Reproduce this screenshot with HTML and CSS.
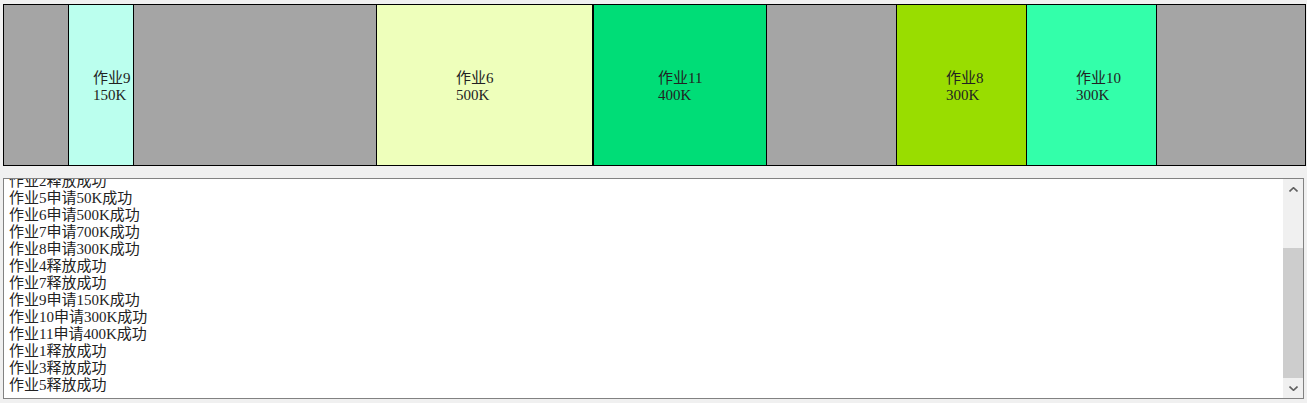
FILE: index.html
```html
<!DOCTYPE html>
<html lang="zh-CN">
<head>
<meta charset="utf-8">
<title>内存分配</title>
<link rel="stylesheet" href="styles.css">
</head>
<body>
<div class="memory">
  <div class="block free" style="width:64px"></div>
  <div class="block job job9 both" style="width:66px"><div class="label" style="padding-left:24px">作业9<br>150K</div></div>
  <div class="block free" style="width:242px"></div>
  <div class="block job job6 both" style="width:217px"><div class="label" style="padding-left:79px">作业6<br>500K</div></div>
  <div class="block job job11 both" style="width:174px"><div class="label" style="padding-left:64px">作业11<br>400K</div></div>
  <div class="block free" style="width:129px"></div>
  <div class="block job job8 left" style="width:130px"><div class="label" style="padding-left:49px">作业8<br>300K</div></div>
  <div class="block job job10 both" style="width:131px"><div class="label" style="padding-left:49px">作业10<br>300K</div></div>
  <div class="block free" style="width:148px"></div>
</div>
<div class="log">
  <div class="log-text">
    <div class="line">作业2释放成功</div>
    <div class="line">作业5申请50K成功</div>
    <div class="line">作业6申请500K成功</div>
    <div class="line">作业7申请700K成功</div>
    <div class="line">作业8申请300K成功</div>
    <div class="line">作业4释放成功</div>
    <div class="line">作业7释放成功</div>
    <div class="line">作业9申请150K成功</div>
    <div class="line">作业10申请300K成功</div>
    <div class="line">作业11申请400K成功</div>
    <div class="line">作业1释放成功</div>
    <div class="line">作业3释放成功</div>
    <div class="line">作业5释放成功</div>
  </div>
  <div class="scrollbar">
    <div class="sb-btn"><svg width="9" height="5" viewBox="0 0 9 5"><polyline points="0.5,4.5 4.5,0.7 8.5,4.5" fill="none" stroke="#606060" stroke-width="1.6"/></svg></div>
    <div class="sb-track"><div class="sb-thumb"></div></div>
    <div class="sb-btn"><svg width="9" height="5" viewBox="0 0 9 5"><polyline points="0.5,0.5 4.5,4.3 8.5,0.5" fill="none" stroke="#606060" stroke-width="1.6"/></svg></div>
  </div>
</div>
</body>
</html>
```

FILE: styles.css
```css
html, body {
  margin: 0;
  background: #f0f0f0;
}
body {
  padding: 4px 0 0 3px;
  font-family: "Liberation Serif", "Noto Sans CJK SC", serif;
  font-size: 15px;
  line-height: 17px;
  color: #222;
}
.memory {
  box-sizing: border-box;
  width: 1303px;
  height: 162px;
  border: 1px solid #000;
  display: flex;
}
.block {
  box-sizing: border-box;
  height: 100%;
  flex: none;
  display: flex;
  align-items: center;
}
.free { background: #a5a5a5; }
.both { border-left: 1px solid #000; border-right: 1px solid #000; }
.left { border-left: 1px solid #000; }
.job9 { background: #bbffee; }
.job6 { background: #eeffbb; }
.job11 { background: #00dd77; }
.job8 { background: #99dd00; }
.job10 { background: #33ffaa; }
.label {
  margin-top: 3px;
  white-space: nowrap;
}
.log {
  box-sizing: border-box;
  margin-top: 12px;
  width: 1301px;
  height: 221px;
  border: 1px solid #828282;
  background: #fff;
  display: flex;
}
.log-text {
  flex: 1;
  overflow: hidden;
  display: flex;
  flex-direction: column;
  justify-content: flex-end;
  padding: 0 0 4px 5px;
}
.line {
  flex: none;
  white-space: nowrap;
}
.scrollbar {
  width: 20px;
  flex: none;
  background: #f0f0f0;
  display: flex;
  flex-direction: column;
}
.sb-btn {
  height: 20px;
  flex: none;
  display: flex;
  align-items: center;
  justify-content: center;
}
.sb-btn svg { display: block; }
.sb-track {
  flex: 1;
  display: flex;
  flex-direction: column;
  justify-content: flex-end;
}
.sb-thumb {
  height: 130px;
  background: #cdcdcd;
}
```
